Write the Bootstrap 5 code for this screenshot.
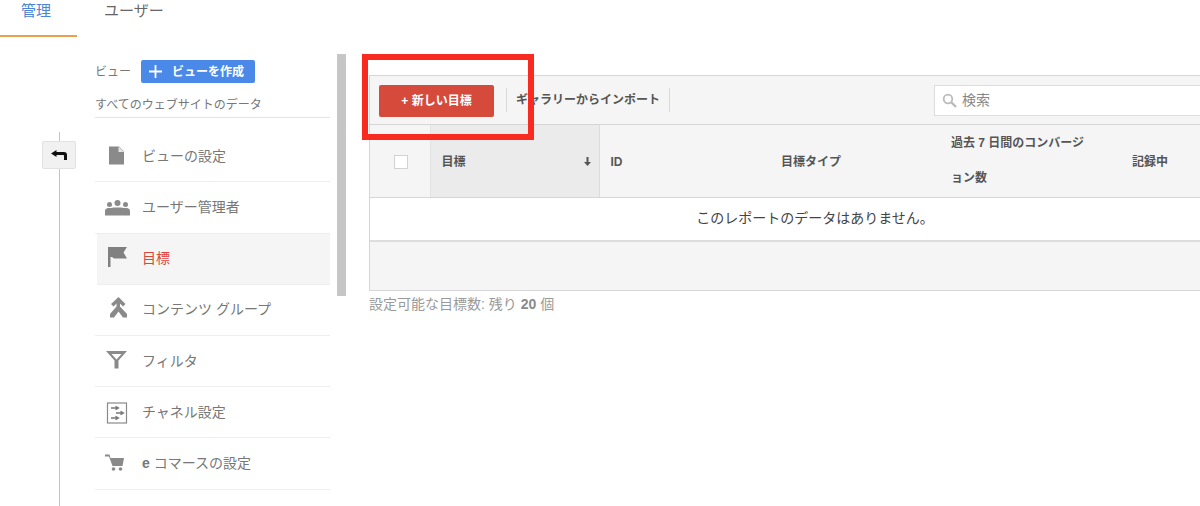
<!DOCTYPE html>
<html lang="ja">
<head>
<meta charset="utf-8">
<title>目標</title>
<link href="https://cdn.jsdelivr.net/npm/bootstrap@5.3.0/dist/css/bootstrap.min.css" rel="stylesheet">
<style>
html,body{height:506px;overflow:hidden;background:#fff}
body{font-family:"Liberation Sans","Noto Sans CJK JP",sans-serif;color:#555;position:relative}
.tabbar{height:37px;width:100%}
.tabbar a{display:block;height:37px;font-size:15px;line-height:22px;color:#666;text-decoration:none}
.tab-on{width:77px;padding-left:21px;color:#4a86d8!important;border-bottom:2px solid #e8a04f}
.tab-off{margin-left:27px}
.shell{height:469px}
.rail{width:95px;flex:none;position:relative}
.rail-line{position:absolute;left:59px;top:95px;bottom:0;width:1px;background:#c4c4c4}
.back-btn{position:absolute;left:42px;top:104px;width:34px;height:28px;background:#f1f1f1;border:1px solid #e2e2e2;border-radius:2px;padding:0;line-height:1}
.side{width:235px;flex:none}
.side-head{height:81px;border-bottom:1px solid #e3e3e3;font-size:12px;color:#777;padding-top:23px}
.view-label{padding:3px 4px 0 0}
.mk-btn{background:#4a89e8;border:0;border-radius:2px;color:#fff;height:23px;width:114px;font-size:12px;font-weight:700;padding:0 3px 0 0;margin-left:6px;gap:10px}
.side-sub{margin-top:14px;line-height:16px}
.side-list{--bs-list-group-bg:transparent;--bs-list-group-border-color:#eee;border-radius:0;margin-top:13.200px}
.side-item{height:51.200px;padding:0 0 0 2px;border:0;border-bottom:1px solid #eee;font-size:14px;color:#777;background:transparent}
.side-item.chosen{background:#f5f5f5;color:#d9463e;margin-left:2px;padding-left:0}
.ic{width:45px;flex:none;padding-left:8px}
.ic svg{display:block}
.tall-bar{width:9px;height:242px;background:#c6c6c6;margin:17px 23px 0 7px;flex:none}
.panel-box{flex:1 1 0;min-width:0;overflow:hidden;margin-top:38px}
.goal-frame{width:900px;border:1px solid #d6d6d6;background:#f5f5f5}
.toolbar{height:49px;padding:0 10px 0 9px;border-bottom:1px solid #d6d6d6}
.new-btn{flex:none;width:115px;height:32px;background:#d64a3c;border:0;border-radius:2px;color:#fff;font-size:12px;font-weight:700;padding:0;margin:1px 12px 0 0}
.tsep{flex:none;width:1px;height:24px;background:#d8d8d8}
.import{font-size:12px;font-weight:700;color:#555;padding:0 9px;white-space:nowrap}
.seek{flex:none;width:340px;height:31px;margin-left:264px;background:#fff;border:1px solid #ddd;font-size:14px;color:#888;padding-left:7px;gap:5px}
.goal-table{table-layout:fixed;width:100%;margin:0;--bs-table-bg:transparent;font-size:12px;font-weight:700;color:#555}
.goal-table th{height:72px;font-weight:700;vertical-align:middle;padding:3px 11px 0;line-height:35px;border-bottom:1px solid #d6d6d6;color:#555}
.goal-table th.two-line{padding-top:1px}
.goal-table th.sorted{background:#ebebeb;border-left:1px solid #e3e3e3;border-right:1px solid #dcdcdc;position:relative}
.sort-arrow{position:absolute;right:8px;top:32px}
.tick{display:block;width:14px;height:14px;background:#fff;border:1px solid #d2d2d2;margin:0 auto 0 13px}
.empty-row{height:44px;background:#fff;border-bottom:2px solid #ddd;font-size:14px;font-weight:400;color:#444;padding-right:8px}
.foot-row{height:48px}
.quota{font-size:14px;color:#9a9a9a;margin-top:4px;line-height:18px}
.quota b{color:#8a8a8a}
.callout{position:absolute;left:362px;top:54px;width:172px;height:86px;border:6px solid #f92a20;pointer-events:none}
</style>
</head>
<body>
<nav class="tabbar d-flex align-items-start">
  <a class="tab-on" href="#">管理</a>
  <a class="tab-off" href="#">ユーザー</a>
</nav>
<div class="shell d-flex">
  <div class="rail">
    <div class="rail-line"></div>
    <button class="back-btn d-flex align-items-center justify-content-center" type="button" aria-label="戻る">
      <svg width="16" height="10" viewBox="0 0 16 10"><path d="M0 3.500 5.500 0v2h7.500Q16 2 16 5v5h-3V5.800Q13 5 12.200 5H5.500V7Z" fill="#111"/></svg>
    </button>
  </div>
  <aside class="side">
    <div class="side-head">
      <div class="d-flex align-items-start"><span class="view-label">ビュー</span>
        <button class="mk-btn d-flex align-items-center justify-content-center" type="button">
          <svg width="13" height="13" viewBox="0 0 13 13"><path d="M5.600 0h1.800v5.600H13v1.800H7.400V13H5.600V7.400H0V5.600h5.600Z" fill="#fff"/></svg>ビューを作成</button>
      </div>
      <div class="side-sub">すべてのウェブサイトのデータ</div>
    </div>
    <div class="list-group side-list">
      <div class="list-group-item side-item d-flex align-items-center">
        <span class="ic"><svg width="26" height="26" viewBox="0 0 26 26"><path d="M4 3.500h10l5 5v13H4Z" fill="#8a8a8a"/><path d="M13.500 3.500v5.500H19" fill="#e4e4e4"/></svg></span>ビューの設定</div>
      <div class="list-group-item side-item d-flex align-items-center">
        <span class="ic"><svg width="26" height="26" viewBox="0 0 26 26"><g fill="#8a8a8a"><circle cx="12.500" cy="9" r="3"/><circle cx="4.500" cy="10.500" r="2.500"/><circle cx="20.500" cy="10.500" r="2.500"/><path d="M0 21.500V17q0-2.500 3-3h3l3-.5h7l3 .5h3q3 .5 3 3v4.500Z"/></g></svg></span>ユーザー管理者</div>
      <div class="list-group-item side-item chosen d-flex align-items-center">
        <span class="ic"><svg width="26" height="26" viewBox="0 0 26 26"><path d="M3 1h2.500v20H3Z" fill="#808080"/><path d="M4 1h18l-3.500 5.500L22 12.500H9l-2-1.500H4Z" fill="#808080"/></svg></span>目標</div>
      <div class="list-group-item side-item d-flex align-items-center">
        <span class="ic"><svg width="26" height="26" viewBox="0 0 26 26"><path d="M13.500 0l7 7-2.500 2.500-3-3V9.500L22 17v3.500h-4l-4.500-6-4.500 6H5V17l6.500-7.500v-3l-3 3L6 7Z" fill="#8a8a8a"/></svg></span>コンテンツ グループ</div>
      <div class="list-group-item side-item d-flex align-items-center">
        <span class="ic"><svg width="26" height="26" viewBox="0 0 26 26"><path d="M1 3h21l-8.500 9.500v8h-4v-8ZM6.500 6l5 5.500 5-5.500Z" fill="#8a8a8a" fill-rule="evenodd"/></svg></span>フィルタ</div>
      <div class="list-group-item side-item d-flex align-items-center">
        <span class="ic"><svg width="26" height="26" viewBox="0 0 26 26"><rect x="2.500" y="4" width="19" height="20" fill="none" stroke="#8a8a8a" stroke-width="1.200"/><path d="M6 9h7M10.500 7.200 13.500 9l-3 1.800M11 14h7M15.500 12.200 18.500 14l-3 1.800M6 19h7M10.500 17.200 13.500 19l-3 1.800" fill="none" stroke="#777" stroke-width="1.300"/></svg></span>チャネル設定</div>
      <div class="list-group-item side-item d-flex align-items-center">
        <span class="ic"><svg width="26" height="26" viewBox="0 0 26 26"><path d="M0 4.500h4.500l1 3.500H19l-1.500 8h-10L4 6.500H0Z" fill="#8a8a8a"/><circle cx="8.500" cy="19" r="1.800" fill="#8a8a8a"/><circle cx="15.500" cy="19" r="1.800" fill="#8a8a8a"/></svg></span><span><b class="fw-bold">e</b> コマースの設定</span></div>
    </div>
  </aside>
  <div class="tall-bar"></div>
  <main class="panel-box">
    <div class="goal-frame">
      <div class="toolbar d-flex align-items-center">
        <button class="new-btn" type="button">+ 新しい目標</button>
        <span class="tsep"></span>
        <span class="import">ギャラリーからインポート</span>
        <span class="tsep"></span>
        <div class="seek d-flex align-items-center">
          <svg width="15" height="15" viewBox="0 0 15 15"><circle cx="6" cy="6" r="4.300" fill="none" stroke="#bbb" stroke-width="1.800"/><path d="M9.500 9.500 14 14" stroke="#bbb" stroke-width="2.400"/></svg>検索</div>
      </div>
      <table class="table goal-table">
        <colgroup><col style="width:60px"><col style="width:169px"><col style="width:171px"><col style="width:170px"><col style="width:181px"><col></colgroup>
        <thead>
          <tr>
            <th><span class="tick"></span></th>
            <th class="sorted">目標<svg class="sort-arrow" width="7" height="9" viewBox="0 0 7 9"><path d="M2.500 0h2v5H7L3.500 9 0 5h2.500Z" fill="#555"/></svg></th>
            <th>ID</th>
            <th>目標タイプ</th>
            <th class="two-line">過去 7 日間のコンバージ<br>ョン数</th>
            <th>記録中</th>
          </tr>
        </thead>
      </table>
      <div class="empty-row d-flex align-items-center justify-content-center">このレポートのデータはありません。</div>
      <div class="foot-row"></div>
    </div>
    <p class="quota">設定可能な目標数: 残り <b>20</b> 個</p>
  </main>
</div>
<div class="callout"></div>
</body>
</html>
